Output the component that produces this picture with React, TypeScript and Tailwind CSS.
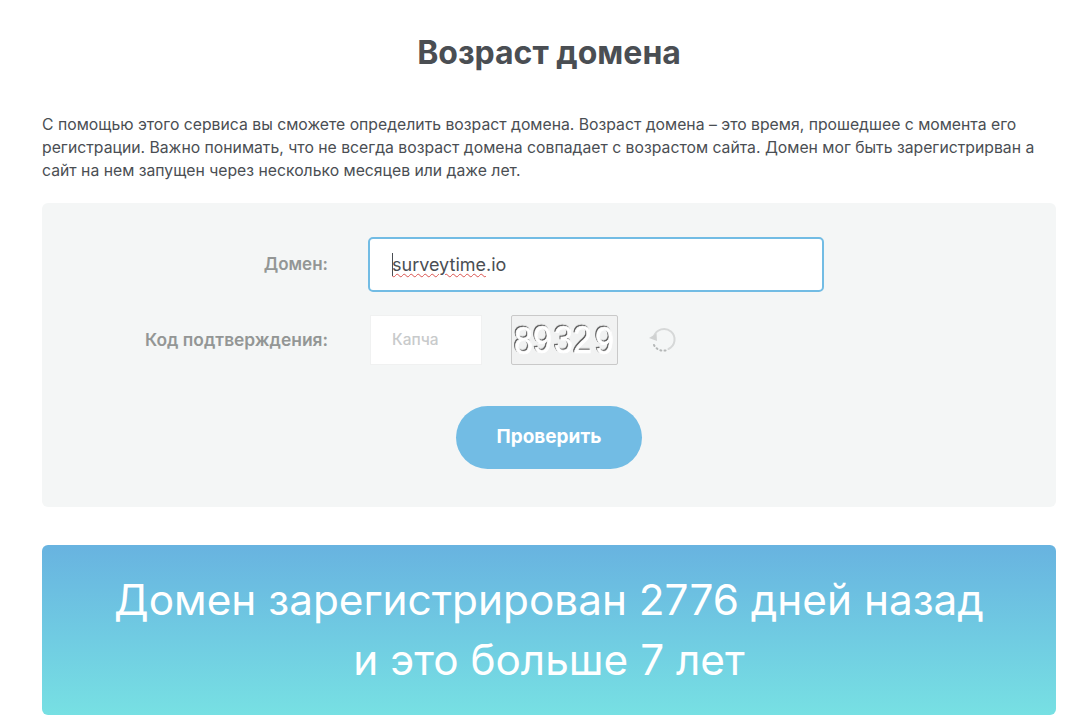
const digits = [
  { c: "8", x: 2, y: 33 },
  { c: "9", x: 21, y: 32.5 },
  { c: "3", x: 42, y: 32.5 },
  { c: "2", x: 61, y: 32.5 },
  { c: "9", x: 83, y: 33 },
];

function CaptchaImage() {
  return (
    <div className="w-[107px] h-[50px] border border-[#c9c9c9] rounded-[2px] bg-[#f1f2f2] overflow-hidden flex items-center justify-center">
      <svg width="105" height="48" viewBox="0 0 105 48" fill="none">
        <g
          transform="scale(1 1.15)"
          fontFamily="'Liberation Sans', sans-serif"
          fontSize="34"
          fill="#ffffff"
          stroke="#ffffff"
          strokeWidth="0.6"
          className="[filter:drop-shadow(-1px_-1px_0_#5a5a5a)]"
        >
          {digits.map((d, i) => (
            <text key={i} x={d.x} y={d.y}>{d.c}</text>
          ))}
        </g>
      </svg>
    </div>
  );
}

function RefreshIcon() {
  return (
    <svg width="30" height="30" viewBox="0 0 30 30" fill="none">
      <path d="M7 10.5 A10.5 10.5 0 1 1 21.5 23" stroke="#d6d8d8" strokeWidth="2" strokeLinecap="round" />
      <path d="M2 12 L9.5 7.5 L10 15 Z" fill="#d0d2d2" />
      <path d="M7 19 A10.5 10.5 0 0 0 20 24" stroke="#b5b8b8" strokeWidth="2" strokeLinecap="round" strokeDasharray="1 3.2" />
    </svg>
  );
}

export default function App() {
  return (
    <div className="w-[1080px] h-[721px] overflow-hidden bg-white pl-[42px] font-['Inter',sans-serif] text-[#4a4e53]">
      <div className="w-[1014px]">
        <h1 className="pt-[33px] text-center text-[32px] leading-[40px] font-bold">Возраст домена</h1>
        <p className="mt-[40px] text-[15.75px] leading-[23px]">
          С помощью этого сервиса вы сможете определить возраст домена. Возраст домена – это время, прошедшее с момента его регистрации. Важно понимать, что не всегда возраст домена совпадает с возрастом сайта. Домен мог быть зарегистрирван а сайт на нем запущен через несколько месяцев или даже лет.
        </p>
        <div className="mt-[21px] h-[304px] rounded-[6px] bg-[#f4f6f6] pt-[34px]">
          <div className="flex items-center h-[55px]">
            <label className="w-[286px] text-right text-[17px] font-semibold text-[#939695]">Домен:</label>
            <div className="relative ml-[40px] w-[456px] h-[55px] rounded-[5px] border-2 border-[#72bce4] bg-white flex items-center pl-[22px] text-[18px]">
              <span className="absolute left-[22px] top-[14px] w-px h-[23px] bg-[#4a4e53]" />
              <span className="underline decoration-wavy decoration-[#d9534f] decoration-1 underline-offset-2">surveytime</span>
              <span>.io</span>
            </div>
          </div>
          <div className="flex items-center mt-[23px] h-[50px]">
            <label className="w-[286px] text-right text-[17.4px] font-semibold text-[#939695]">Код подтверждения:</label>
            <div className="ml-[42px] w-[112px] h-[50px] bg-white border border-[#f0f1f1] flex items-center pl-[21px] text-[15.5px] font-medium text-[#c8cacb]">Капча</div>
            <div className="ml-[29px]"><CaptchaImage /></div>
            <div className="ml-[29px] mt-[2px]"><RefreshIcon /></div>
          </div>
          <div className="flex justify-center mt-[41px]">
            <button className="w-[186px] h-[63px] rounded-full bg-[#72bce4] text-white font-bold text-[19px]">Проверить</button>
          </div>
        </div>
        <div className="mt-[38px] h-[170px] rounded-[6px] bg-gradient-to-b from-[#68b3e0] to-[#77e0e3] flex flex-col items-center justify-center text-white text-[42.3px] leading-[60px]">
          <div>Домен зарегистрирован 2776 дней назад</div>
          <div>и это больше 7 лет</div>
        </div>
      </div>
    </div>
  );
}
